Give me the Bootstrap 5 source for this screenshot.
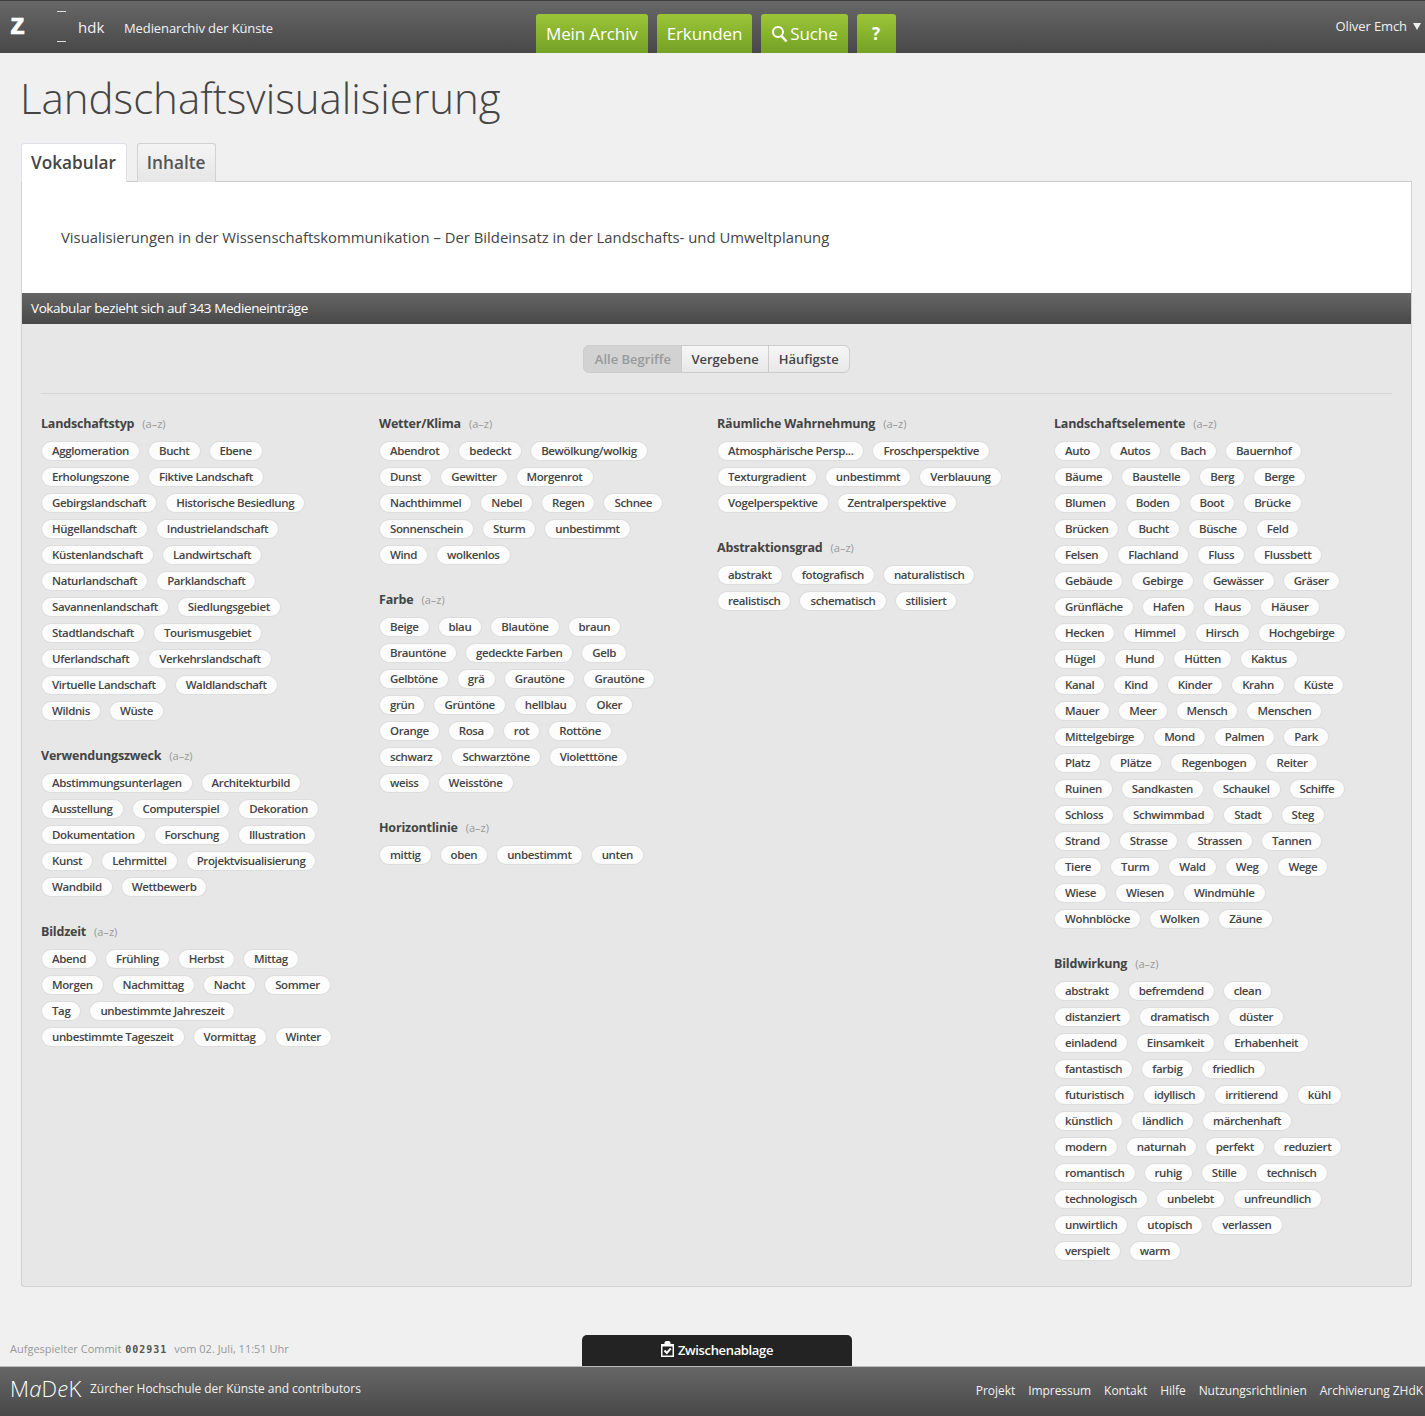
<!DOCTYPE html>
<html lang="de">
<head>
    <meta charset="UTF-8">
    <title>Landschaftsvisualisierung</title>
    <link href="https://cdn.jsdelivr.net/npm/bootstrap@5.3.0/dist/css/bootstrap.min.css" rel="stylesheet">
    <style>
        body { font-family: "Open Sans", "Liberation Sans", sans-serif; background: #f0f0f0; color: #444; font-size: 14px; }
        .app-top, .app-foot { background: linear-gradient(#676767, #484848); color: #f2f2f2; }
        .app-top { height: 53px; border-top: 1px solid #3c3c3c; position: relative; }
        .logo-z { font: 700 30px/1 "Liberation Sans", sans-serif; -webkit-text-stroke: .6px #fff; color: #fff; width: 78px; padding-left: 10px; margin-top: 8px; height: 30px; }
        .logo-hdk { font-size: 15px; width: 46px; margin-top: 16px; line-height: 20px; height: 20px; position: relative; }
        .logo-hdk::before, .logo-hdk::after { content: ""; position: absolute; left: -21px; width: 9px; height: 1px; background: #ddd; }
        .logo-hdk::before { top: -6px; }
        .logo-hdk::after { top: 24px; }
        .app-name { font-size: 13px; letter-spacing: -.1px; margin-top: 17px; line-height: 20px; height: 20px; }
        .main-links { position: absolute; left: 536px; top: 13px; gap: 9px; }
        .main-links a { display: flex; align-items: center; height: 39px; padding: 0 10px; color: #fff; font-size: 17px; letter-spacing: -.12px; text-decoration: none; background: linear-gradient(#9cc537, #74a127); border-radius: 3px 3px 0 0; }
        .main-links a.help-link { font-weight: 700; width: 39px; justify-content: center; padding: 0; }
        .main-links svg { margin-right: 2px; }
        .user-name { position: absolute; right: 18px; top: 15px; font-size: 13px; line-height: 20px; letter-spacing: -.1px; }
        .user-name::after { content: ""; position: absolute; left: 100%; top: 7px; margin-left: 6px; border: 4px solid transparent; border-top: 7px solid #eee; border-bottom: 0; }
        .page-title { font-size: 42px; font-weight: 300; line-height: 42px; margin: 24px 0 24px 20px; color: #444; }
        .tab-row { margin: 0 13px 0 21px; padding: 0; border-bottom: 0; gap: 10px; height: 38px; }
        .tab-row .nav-link { height: 39px; padding: 7px 10px 0 9px; font-size: 17.2px; font-weight: 600; line-height: 24px; color: #555; background: linear-gradient(#f4f4f4, #e6e6e6); border: 1px solid #d2d2d2; border-bottom: 0; border-radius: 3px 3px 0 0; }
        .tab-row .nav-link.active { position: relative; z-index: 1; background: #fff; color: #444; margin-bottom: 0; }
        .content-box { margin: 0 13px 0 21px; border: 1px solid #d2d2d2; border-top-color: #ccc; border-radius: 0 0 3px 3px; background: #e7e7e7; }
        .intro-text { background: #fff; height: 111px; padding: 44px 39px 0; font-size: 14.85px; line-height: 22px; }
        .count-bar { height: 31px; padding: 4px 9px; background: linear-gradient(#666, #484848); color: #fff; font-size: 13.5px; letter-spacing: -.4px; line-height: 22px; }
        .filter-row { padding-top: 21px; height: 70px; margin: 0 19px; border-bottom: 1px solid #d4d4d4; }
        .filter-row .btn { height: 28px; padding: 0 10px; font-size: 13px; font-weight: 600; color: #444; line-height: 26px; background: linear-gradient(#f6f6f6, #e8e8e8); border: 1px solid #ccc; }
        .filter-row .btn.is-on { color: #999; background: #d2d2d2; padding: 0 10.5px; }
        .filter-row .btn:nth-child(2) { padding: 0 9px; }
        .vocab-cols { display: grid; grid-template-columns: 338px 338px 337px 338px; margin: 0 19px; padding: 20px 0 25px; height: 892px; }
        .vocab-group { margin-bottom: 19px; }
        .vocab-head { font-size: 12.5px; letter-spacing: -.2px; font-weight: 700; line-height: 20px; margin-bottom: 7px; color: #444; }
        .vocab-head small { font-size: 11px; font-weight: 400; letter-spacing: 0; color: #999; margin-left: 5px; }
        .chip-line { display: flex; gap: 9px; height: 26px; }
        .chip { height: 18px; margin: 1px 0 0 1px; padding: 0 10px; font-size: 11.5px; font-weight: 600; letter-spacing: -.38px; line-height: 17px; white-space: nowrap; color: #444; background: #fcfcfc; border: 0; border-radius: 9px; box-shadow: 0 0 0 1px #ddd; }
        .below-row { height: 79px; position: relative; }
        .commit-note { position: absolute; left: 10px; top: 54px; font-size: 11px; line-height: 16px; color: #999; }
        .commit-note code { font: 700 10px "DejaVu Sans Mono", monospace; letter-spacing: 1px; color: #555; margin: 0 4px 0 1px; }
        .clipboard-tab { position: absolute; left: 582px; top: 48px; width: 270px; height: 31px; padding-top: 1px; background: #232323; color: #fff; border-radius: 5px 5px 0 0; font-size: 13px; font-weight: 600; letter-spacing: -.35px; line-height: 28px; text-align: center; }
        .clipboard-tab svg { vertical-align: -2px; margin-right: 1px; }
        .app-foot { height: 50px; border-top: 1px solid #bbb; font-size: 12px; letter-spacing: -.05px; }
        .madek-logo { font-size: 22px; font-weight: 300; line-height: 1; letter-spacing: .2px; color: #fff; width: 90px; padding: 10px 0 0 10px; }
        .foot-left { padding-top: 14px; line-height: 16px; }
        .foot-links { margin-left: auto; gap: 13px; padding: 16px 2px 0 0; line-height: 16px; }
        .foot-links a { color: #f2f2f2; text-decoration: none; }
    </style>
</head>
<body>
    <!-- Top bar -->
    <header class="app-top d-flex">
        <div class="logo-z">z</div>
        <div class="logo-hdk">hdk</div>
        <div class="app-name">Medienarchiv der Künste</div>
        <nav class="main-links d-flex">
            <a href="#">Mein Archiv</a>
            <a href="#">Erkunden</a>
            <a href="#"><svg width="17" height="18" viewBox="0 0 17 18" fill="none" stroke="#fff"><circle cx="7" cy="7" r="5" stroke-width="2"/><path d="M10.5 11 15.5 16.5" stroke-width="2.6"/></svg>Suche</a>
            <a href="#" class="help-link">?</a>
        </nav>
        <div class="user-name">Oliver Emch</div>
    </header>

    <h1 class="page-title">Landschaftsvisualisierung</h1>

    <ul class="nav nav-tabs tab-row">
        <li class="nav-item"><a class="nav-link active" href="#">Vokabular</a></li>
        <li class="nav-item"><a class="nav-link" href="#">Inhalte</a></li>
    </ul>

    <main class="content-box">
        <div class="intro-text">Visualisierungen in der Wissenschaftskommunikation – Der Bildeinsatz in der Landschafts- und Umweltplanung</div>
        <div class="count-bar">Vokabular bezieht sich auf 343 Medieneinträge</div>
        <div class="filter-row d-flex justify-content-center align-items-start">
            <div class="btn-group">
                <button class="btn is-on">Alle Begriffe</button>
                <button class="btn">Vergebene</button>
                <button class="btn">Häufigste</button>
            </div>
        </div>
        <div class="vocab-cols" id="vocabCols"></div>
    </main>

    <div class="below-row">
        <div class="commit-note">Aufgespielter Commit <code>002931</code> vom 02. Juli, 11:51 Uhr</div>
        <div class="clipboard-tab">
            <svg width="13" height="16" viewBox="0 0 13 16"><path fill="#fff" d="M0 3h3.5V1.5C3.5.6 4.5 0 6.5 0s3 .6 3 1.5V3H13v13H0z"/><rect x="1.5" y="5.5" width="10" height="9" fill="#232323"/><path fill="none" stroke="#fff" stroke-width="2" d="M3.5 9.5 5.8 12 9.8 7.5"/></svg>
            Zwischenablage
        </div>
    </div>

    <footer class="app-foot d-flex">
        <div class="madek-logo">M<i>a</i>D<i>e</i>K</div>
        <div class="foot-left">Zürcher Hochschule der Künste and contributors</div>
        <div class="foot-links d-flex">
            <a href="#">Projekt</a>
            <a href="#">Impressum</a>
            <a href="#">Kontakt</a>
            <a href="#">Hilfe</a>
            <a href="#">Nutzungsrichtlinien</a>
            <a href="#">Archivierung ZHdK</a>
        </div>
    </footer>

    <script>
        // One entry per column: [heading, rows separated by ;]
        const VOCAB = [
            [
                ['Landschaftstyp', 'Agglomeration,Bucht,Ebene;Erholungszone,Fiktive Landschaft;Gebirgslandschaft,Historische Besiedlung;Hügellandschaft,Industrielandschaft;Küstenlandschaft,Landwirtschaft;Naturlandschaft,Parklandschaft;Savannenlandschaft,Siedlungsgebiet;Stadtlandschaft,Tourismusgebiet;Uferlandschaft,Verkehrslandschaft;Virtuelle Landschaft,Waldlandschaft;Wildnis,Wüste'],
                ['Verwendungszweck', 'Abstimmungsunterlagen,Architekturbild;Ausstellung,Computerspiel,Dekoration;Dokumentation,Forschung,Illustration;Kunst,Lehrmittel,Projektvisualisierung;Wandbild,Wettbewerb'],
                ['Bildzeit', 'Abend,Frühling,Herbst,Mittag;Morgen,Nachmittag,Nacht,Sommer;Tag,unbestimmte Jahreszeit;unbestimmte Tageszeit,Vormittag,Winter']
            ],
            [
                ['Wetter/Klima', 'Abendrot,bedeckt,Bewölkung/wolkig;Dunst,Gewitter,Morgenrot;Nachthimmel,Nebel,Regen,Schnee;Sonnenschein,Sturm,unbestimmt;Wind,wolkenlos'],
                ['Farbe', 'Beige,blau,Blautöne,braun;Brauntöne,gedeckte Farben,Gelb;Gelbtöne,grä,Grautöne,Grautöne;grün,Grüntöne,hellblau,Oker;Orange,Rosa,rot,Rottöne;schwarz,Schwarztöne,Violetttöne;weiss,Weisstöne'],
                ['Horizontlinie', 'mittig,oben,unbestimmt,unten']
            ],
            [
                ['Räumliche Wahrnehmung', 'Atmosphärische Persp...,Froschperspektive;Texturgradient,unbestimmt,Verblauung;Vogelperspektive,Zentralperspektive'],
                ['Abstraktionsgrad', 'abstrakt,fotografisch,naturalistisch;realistisch,schematisch,stilisiert']
            ],
            [
                ['Landschaftselemente', 'Auto,Autos,Bach,Bauernhof;Bäume,Baustelle,Berg,Berge;Blumen,Boden,Boot,Brücke;Brücken,Bucht,Büsche,Feld;Felsen,Flachland,Fluss,Flussbett;Gebäude,Gebirge,Gewässer,Gräser;Grünfläche,Hafen,Haus,Häuser;Hecken,Himmel,Hirsch,Hochgebirge;Hügel,Hund,Hütten,Kaktus;Kanal,Kind,Kinder,Krahn,Küste;Mauer,Meer,Mensch,Menschen;Mittelgebirge,Mond,Palmen,Park;Platz,Plätze,Regenbogen,Reiter;Ruinen,Sandkasten,Schaukel,Schiffe;Schloss,Schwimmbad,Stadt,Steg;Strand,Strasse,Strassen,Tannen;Tiere,Turm,Wald,Weg,Wege;Wiese,Wiesen,Windmühle;Wohnblöcke,Wolken,Zäune'],
                ['Bildwirkung', 'abstrakt,befremdend,clean;distanziert,dramatisch,düster;einladend,Einsamkeit,Erhabenheit;fantastisch,farbig,friedlich;futuristisch,idyllisch,irritierend,kühl;künstlich,ländlich,märchenhaft;modern,naturnah,perfekt,reduziert;romantisch,ruhig,Stille,technisch;technologisch,unbelebt,unfreundlich;unwirtlich,utopisch,verlassen;verspielt,warm']
            ]
        ];

        document.getElementById('vocabCols').innerHTML = VOCAB.map(col => `
            <div>${col.map(([head, rows]) => `
                <section class="vocab-group">
                    <div class="vocab-head">${head} <small>(a–z)</small></div>
                    ${rows.split(';').map(row => `
                        <div class="chip-line">${row.split(',').map(t => `<a class="chip text-decoration-none">${t}</a>`).join('')}</div>
                    `).join('')}
                </section>`).join('')}
            </div>`).join('');
    </script>

    <script src="https://cdn.jsdelivr.net/npm/bootstrap@5.3.0/dist/js/bootstrap.bundle.min.js"></script>
</body>
</html>
